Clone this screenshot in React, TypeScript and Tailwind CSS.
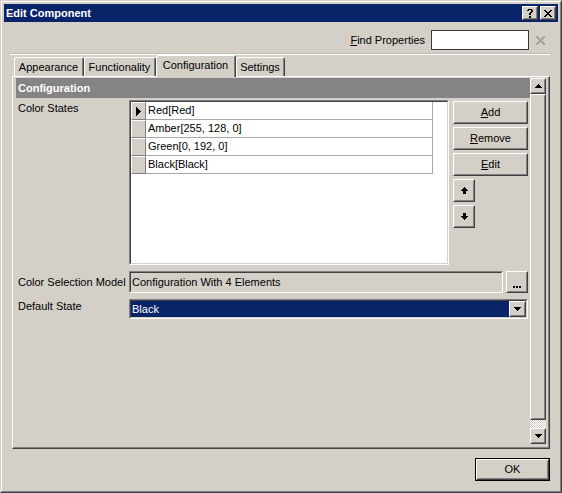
import type { ReactNode } from "react";

const raised = "border border-t-white border-l-white border-r-[#404040] border-b-[#404040]";
const raisedInner = "border border-t-[#d4d0c8] border-l-[#d4d0c8] border-r-[#808080] border-b-[#808080]";
const sunken = "border border-t-[#808080] border-l-[#808080] border-r-white border-b-white";
const sunkenInner = "border border-t-[#404040] border-l-[#404040] border-r-[#d4d0c8] border-b-[#d4d0c8]";

// tiny pixel-art glyphs
const Pix = ({ rows, color = "#000" }: { rows: string[]; color?: string }) => (
  <svg width={rows[0].length} height={rows.length} shapeRendering="crispEdges">
    {rows.flatMap((r, y) =>
      [...r].map((c, x) =>
        c === "x" ? <rect key={`${x}-${y}`} x={x} y={y} width={1} height={1} fill={color} /> : null
      )
    )}
  </svg>
);

const triUp = ["...x...", "..xxx..", ".xxxxx.", "xxxxxxx"];
const triDown = ["xxxxxxx", ".xxxxx.", "..xxx..", "...x..."];
const arrowUp = ["...x...", "..xxx..", ".xxxxx.", "xxxxxxx", "..xxx..", "..xxx..", "..xxx.."];
const arrowDown = ["..xxx..", "..xxx..", "..xxx..", "xxxxxxx", ".xxxxx.", "..xxx..", "...x..."];
const pointer = ["x....", "xx...", "xxx..", "xxxx.", "xxxxx", "xxxx.", "xxx..", "xx...", "x...."];
const closeX = ["xx....xx", ".xx..xx.", "..xxxx..", "...xx...", "..xxxx..", ".xx..xx.", "xx....xx"];
const question = [".xxxx.", "xx..xx", "....xx", "...xx.", "..xx..", "..xx..", "......", "..xx..", "..xx.."];
const findX = [
  "xx.....xx",
  "xxx...xxx",
  ".xxx.xxx.",
  "..xxxxx..",
  "...xxx...",
  "..xxxxx..",
  ".xxx.xxx.",
  "xxx...xxx",
  "xx.....xx",
];

const Btn = ({ className, children }: { className: string; children?: ReactNode }) => (
  <div className={`${raised} bg-[#d4d0c8] ${className}`}>
    <div className={`${raisedInner} h-full w-full flex items-center justify-center`}>{children}</div>
  </div>
);

const states = ["Red[Red]", "Amber[255, 128, 0]", "Green[0, 192, 0]", "Black[Black]"];

const tabs = [
  { label: "Appearance", w: "w-[70px]" },
  { label: "Functionality", w: "w-[72px]" },
  { label: "Configuration", w: "w-[80px]", active: true },
  { label: "Settings", w: "w-[49px]" },
];

export default function App() {
  return (
    <div className="w-[562px] h-[493px] bg-[#d4d0c8] font-['Liberation_Sans',Arial,sans-serif] text-[11px] leading-[13px] text-black border border-t-[#d4d0c8] border-l-[#d4d0c8] border-r-[#404040] border-b-[#404040] select-none">
      <div className="h-full flex flex-col p-[2px] border border-t-white border-l-white border-r-[#808080] border-b-[#808080]">
        {/* title bar */}
        <div className="h-[18px] bg-[#0a246a] flex items-center pl-[2px] pr-[2px]">
          <span className="text-white font-bold flex-1">Edit Component</span>
          <Btn className="w-[16px] h-[14px]">
            <Pix rows={question} />
          </Btn>
          <Btn className="w-[16px] h-[14px] ml-[2px]">
            <Pix rows={closeX} />
          </Btn>
        </div>

        <div className="flex-1 flex flex-col">
          {/* find properties */}
          <div className="mt-[8px] h-[20px] flex items-center justify-end pr-[13px]">
            <span className="mr-[6px]">
              <span className="underline underline-offset-1">F</span>ind Properties
            </span>
            <div className="w-[98px] h-[20px] bg-white border border-[#3a3a3a]" />
            <div className="ml-[7px]">
              <Pix rows={findX} color="#a6a4a0" />
            </div>
          </div>
          <div className="mt-[3px] ml-[6px] mr-[8px] h-[2px] border-t border-t-[#bfbbb3] border-b border-b-white" />

          {/* tabs */}
          <div className="h-[21px] flex items-end pl-[10px]">
            {tabs.map((t) => (
              <div
                key={t.label}
                className={`${t.w} ${
                  t.active ? "h-[22px] -mb-[1px] relative z-10" : "h-[19px]"
                } bg-[#d4d0c8] rounded-t-[3px] border-t border-l border-r border-t-white border-l-white border-r-[#404040]`}
              >
                <div className="h-full border-r border-r-[#808080] flex justify-center pt-[3px]">{t.label}</div>
              </div>
            ))}
          </div>

          {/* tab panel */}
          <div className="ml-[8px] w-[538px] h-[373px] border border-t-white border-l-white border-r-[#404040] border-b-[#404040]">
            <div className="h-full border-r border-b border-r-[#808080] border-b-[#808080] pl-[3px] pt-[1px] pr-[2px] pb-[3px] flex">
              <div className="w-[514px] flex flex-col">
                <div className="h-[20px] bg-[#858385] text-white font-bold pl-[2px] flex items-center">Configuration</div>

                {/* color states */}
                <div className="mt-[2px] flex">
                  <div className="w-[113px] pl-[2px] pt-[2px]">Color States</div>
                  <div className={`${sunken} w-[320px] h-[165px]`}>
                    <div className={`${sunkenInner} h-full bg-white`}>
                      {states.map((s, i) => (
                        <div key={s} className="flex h-[18px]">
                          <div className="w-[15px] bg-[#d4d0c8] border border-t-white border-l-white border-r-[#808080] border-b-[#808080] flex items-center justify-center">
                            {i === 0 && <Pix rows={pointer} />}
                          </div>
                          <div className="w-[287px] border-r border-b border-r-[#a8a8a8] border-b-[#a8a8a8] pl-[2px] flex items-center">
                            {s}
                          </div>
                        </div>
                      ))}
                    </div>
                  </div>
                  <div className="ml-[4px] mt-[1px] w-[75px] flex flex-col gap-[3px]">
                    <Btn className="h-[23px]">
                      <span>
                        <span className="underline underline-offset-1">A</span>dd
                      </span>
                    </Btn>
                    <Btn className="h-[23px]">
                      <span>
                        <span className="underline underline-offset-1">R</span>emove
                      </span>
                    </Btn>
                    <Btn className="h-[23px]">
                      <span>
                        <span className="underline underline-offset-1">E</span>dit
                      </span>
                    </Btn>
                    <Btn className="w-[22px] h-[23px]">
                      <Pix rows={arrowUp} />
                    </Btn>
                    <Btn className="w-[22px] h-[23px]">
                      <Pix rows={arrowDown} />
                    </Btn>
                  </div>
                </div>

                {/* color selection model */}
                <div className="mt-[6px] h-[22px] flex items-center">
                  <div className="w-[113px] pl-[2px]">Color Selection Model</div>
                  <div className={`${sunken} w-[374px] h-[22px]`}>
                    <div className={`${sunkenInner} h-full flex items-center pl-[1px]`}>Configuration With 4 Elements</div>
                  </div>
                  <div className={`${raised} ml-[3px] w-[22px] h-[22px]`}>
                    <div className={`${raisedInner} h-full flex items-end justify-center pb-[3px]`}>
                      <Pix rows={["xx.xx.xx", "xx.xx.xx"]} />
                    </div>
                  </div>
                </div>

                {/* default state */}
                <div className="mt-[6px] flex">
                  <div className="w-[113px] pl-[2px] pt-[1px]">Default State</div>
                  <div className={`${sunken} w-[399px] h-[20px]`}>
                    <div className={`${sunkenInner} h-full flex bg-white`}>
                      <div className="flex-1 bg-[#0a246a] text-white pl-[1px] flex items-center">Black</div>
                      <Btn className="w-[17px] h-full">
                        <Pix rows={triDown} />
                      </Btn>
                    </div>
                  </div>
                </div>
              </div>

              {/* scrollbar */}
              <div className="w-[16px] flex flex-col">
                <Btn className="h-[16px]">
                  <Pix rows={triUp} />
                </Btn>
                <Btn className="h-[326px]" />
                <div className="h-[8px] bg-[image:repeating-conic-gradient(#ffffff_0_25%,#d4d0c8_0_50%)] bg-[length:2px_2px]" />
                <Btn className="h-[16px]">
                  <Pix rows={triDown} />
                </Btn>
              </div>
            </div>
          </div>

          {/* OK */}
          <div className="mt-[9px] mr-[8px] self-end w-[75px] h-[23px] border border-black">
            <div className={`${raised} h-full`}>
              <div className={`${raisedInner} h-full flex items-center justify-center`}>OK</div>
            </div>
          </div>
        </div>
      </div>
    </div>
  );
}
